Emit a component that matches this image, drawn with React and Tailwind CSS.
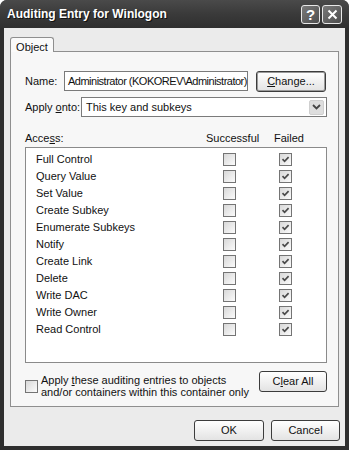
import React from "react";

const rights = [
  "Full Control",
  "Query Value",
  "Set Value",
  "Create Subkey",
  "Enumerate Subkeys",
  "Notify",
  "Create Link",
  "Delete",
  "Write DAC",
  "Write Owner",
  "Read Control",
];

const CheckBox = ({ checked }) => (
  <span className="w-[13px] h-[13px] border border-[#747474] bg-linear-to-br from-[#d8d8d8] to-[#fbfbfb] flex items-center justify-center shrink-0">
    {checked && (
      <svg width="9" height="9" viewBox="0 0 9 9">
        <path d="M1.5 4.2 L3.6 6.3 L7.6 2.2" stroke="#4a4a4a" strokeWidth="1.7" fill="none" />
      </svg>
    )}
  </span>
);

const XpButton = ({ children, className = "", focused = false }) => (
  <div
    className={`h-[21px] rounded-[3px] border border-[#3c3c3c] bg-linear-to-b from-white to-[#e3e3e3] flex items-center justify-center text-[#111] ${
      focused ? "ring-1 ring-inset ring-[#9a9a9a]" : ""
    } ${className}`}
  >
    {children}
  </div>
);

export default function App() {
  return (
    <div className="w-[350px] h-[451px] bg-white font-['Liberation_Sans',Arial,sans-serif] text-[11px] text-[#111]">
      <div className="w-[349px] h-[450px] flex flex-col bg-[#2e2e2e] rounded-t-[7px] pl-[4px] pr-[4px] pb-[4px]">
        {/* title bar */}
        <div className="h-[28px] flex items-center justify-between bg-linear-to-b from-[#4a4a4a] via-[#3a3a3a] to-[#2f2f2f] -mx-[4px] pl-[7px] pr-[7px] rounded-t-[7px]">
          <span className="text-white font-bold text-[12px] [text-shadow:1px_1px_0_#111]">
            Auditing Entry for Winlogon
          </span>
          <div className="flex gap-[2px]">
            <div className="w-[19px] h-[19px] rounded-[3px] border border-[#e8e8e8] bg-linear-to-br from-[#7a7a7a] to-[#4e4e4e] flex items-center justify-center text-white font-bold text-[15px] leading-none">
              ?
            </div>
            <div className="w-[20px] h-[19px] rounded-[3px] border border-[#e8e8e8] bg-linear-to-br from-[#7a7a7a] to-[#4e4e4e] flex items-center justify-center">
              <svg width="11" height="11" viewBox="0 0 11 11">
                <path d="M1.5 1.5 L9.5 9.5 M9.5 1.5 L1.5 9.5" stroke="white" strokeWidth="2" />
              </svg>
            </div>
          </div>
        </div>

        {/* body */}
        <div className="flex-1 flex flex-col bg-[#ebebeb]">
          {/* tab */}
          <div className="pt-[9px] pl-[6px] flex">
            <div className="w-[44px] h-[15px] border border-b-0 border-[#8f8f8f] rounded-t-[3px] bg-[#fafafa] flex items-start justify-center pt-[1px] -mb-px relative z-10">
              Object
            </div>
          </div>

          {/* panel */}
          <div className="ml-[6px] mr-[6px] h-[356px] border border-[#8f8f8f] bg-[#f7f7f7] pl-[14px] pr-[11px] flex flex-col">
            <div className="mt-[18px] flex items-center h-[22px]">
              <span className="w-[39px]">Name:</span>
              <div className="w-[184px] h-[20px] border border-[#7a7a7a] bg-white flex items-center pl-[3px] tracking-[-0.5px] whitespace-nowrap overflow-hidden">
                Administrator (KOKOREV\Administrator)
              </div>
              <XpButton focused className="ml-[8px] w-[70px]">
                <span>
                  <span className="underline">C</span>hange...
                </span>
              </XpButton>
            </div>

            <div className="mt-[5px] flex items-center h-[20px]">
              <span className="w-[56px]">
                Apply <span className="underline">o</span>nto:
              </span>
              <div className="flex-1 h-[20px] border border-[#7a7a7a] bg-white flex items-center pl-[4px] pr-[2px]">
                <span className="flex-1">This key and subkeys</span>
                <div className="w-[15px] h-[15px] rounded-[2px] bg-[#dedede] border border-[#cfcfcf] flex items-center justify-center">
                  <svg width="9" height="6" viewBox="0 0 9 6">
                    <path d="M1 1 L4.5 4.5 L8 1" stroke="#444" strokeWidth="1.8" fill="none" />
                  </svg>
                </div>
              </div>
            </div>

            <div className="mt-[15px] flex items-center h-[12px]">
              <span className="flex-1">
                Acce<span className="underline">s</span>s:
              </span>
              <span className="w-[48px] text-center">Successful</span>
              <span className="w-[26px] ml-[20px] mr-[27px] text-center">Failed</span>
            </div>

            <div className="mt-[3px] h-[216px] border border-[#8a8a8a] bg-white pt-[3px] pl-[10px] flex flex-col">
              {rights.map((r) => (
                <div key={r} className="h-[17px] flex items-center">
                  <span className="flex-1">{r}</span>
                  <div className="w-[56px] flex justify-start">
                    <CheckBox />
                  </div>
                  <div className="w-[47px] flex justify-start">
                    <CheckBox checked />
                  </div>
                </div>
              ))}
            </div>

            <div className="mt-[8px] flex items-start">
              <div className="mt-[9px]">
                <CheckBox />
              </div>
              <div className="ml-[3px] mt-[3px] leading-[12px] flex-1">
                Apply <span className="underline">t</span>hese auditing entries to objects
                <br />
                and/or containers within this container only
              </div>
              <XpButton className="w-[68px]">
                <span>
                  C<span className="underline">l</span>ear All
                </span>
              </XpButton>
            </div>
          </div>

          {/* bottom buttons */}
          <div className="flex justify-end gap-[7px] pr-[5px] mt-[13px]">
            <XpButton className="w-[70px]">OK</XpButton>
            <XpButton className="w-[69px]">Cancel</XpButton>
          </div>
        </div>
      </div>
    </div>
  );
}
